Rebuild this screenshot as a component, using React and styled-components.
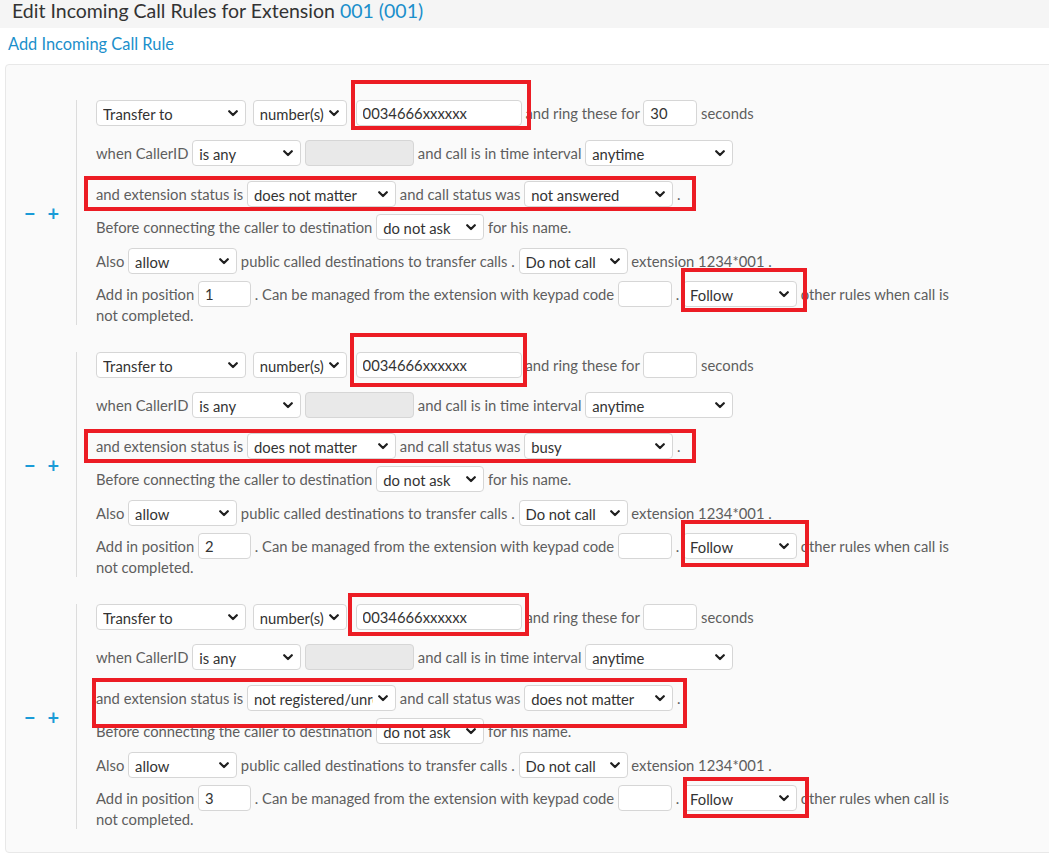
import React from "react";
import styled, { createGlobalStyle } from "styled-components";

const GlobalStyle = createGlobalStyle`
  body {
    margin: 0;
    background: #fff;
    font-family: Lato, "Open Sans", sans-serif;
    color: #5e5e5e;
    overflow-x: hidden;
  }
`;

const Header = styled.div`
  height: 28px;
  padding: 0 12px;
  background: #f5f5f5;
  font-size: 19.5px;
  line-height: 21px;
  color: #333;
`;

const ExtNum = styled.span`
  color: #1b8fcb;
`;

const AddLink = styled.a`
  display: inline-block;
  margin: 7px 0 0 8px;
  font-size: 16.4px;
  line-height: 18px;
  color: #1b8fcb;
  text-decoration: none;
`;

const Panel = styled.div`
  margin: 11px -20px 0 5px;
  padding: 35px 0 23px;
  border: 1px solid #e8e8e8;
  border-radius: 4px;
  background: #fafafa;
`;

const Rule = styled.div`
  display: flex;
  align-items: center;
  margin-top: ${(p) => (p.$first ? 0 : 27)}px;
`;

const Controls = styled.div`
  width: 70px;
  display: flex;
  align-items: center;
  gap: 12px;
  padding-left: 18px;
  box-sizing: border-box;
  font-size: 20px;
  font-weight: 700;
  color: #1a9bd7;
  user-select: none;
`;

const Body = styled.div`
  position: relative;
  flex: 1;
  padding-left: 19px;
  border-left: 1px solid #dcdcdc;
  font-size: 14.8px;
`;

const Row = styled.div`
  margin-top: ${(p) => p.$mt || 0}px;
  height: 26px;
  line-height: 26px;
  white-space: nowrap;
`;

const Tail = styled.div`
  margin-top: -2px;
  line-height: 20px;
`;

const SelectBox = styled.span`
  position: relative;
  display: inline-block;
  vertical-align: top;
  width: ${(p) => p.$w}px;
  height: 26px;
  margin-left: ${(p) => p.$ml || 0}px;
`;

const NativeSelect = styled.select`
  appearance: none;
  display: block;
  width: 100%;
  height: 100%;
  box-sizing: border-box;
  padding: 0 22px 0 6px;
  border: 1px solid #d6d6d6;
  border-radius: 4px;
  background: #fff;
  font: inherit;
  color: #333;
  outline: none;
`;

const Chevron = styled.svg`
  position: absolute;
  right: 8px;
  top: 10px;
  pointer-events: none;
`;

const TextInput = styled.input`
  display: inline-block;
  vertical-align: top;
  width: ${(p) => p.$w}px;
  height: 26px;
  box-sizing: border-box;
  margin: 0 0 0 ${(p) => p.$ml || 0}px;
  padding: 0 6px;
  border: 1px solid #d6d6d6;
  border-radius: 4px;
  background: ${(p) => (p.disabled ? "#e9e9e9" : "#fff")};
  font: inherit;
  color: #333;
  outline: none;
`;

const Mark = styled.div`
  position: absolute;
  box-sizing: border-box;
  border: 4px solid #ec1c24;
  pointer-events: none;
`;

const Select = ({ w, ml, value, options }) => (
  <SelectBox $w={w} $ml={ml}>
    <NativeSelect defaultValue={value}>
      {(options || [value]).map((o) => (
        <option key={o}>{o}</option>
      ))}
    </NativeSelect>
    <Chevron width="10" height="7" viewBox="0 0 10 7">
      <path d="M1.2 1.2 L5 5 L8.8 1.2" fill="none" stroke="#1f1f1f" strokeWidth="2.2" strokeLinecap="round" strokeLinejoin="round" />
    </Chevron>
  </SelectBox>
);

const rules = [
  {
    ring: "30",
    extStatus: "does not matter",
    callStatus: "not answered",
    position: "1",
    marks: [
      [274, -20, 180, 50],
      [7, 76, 612, 35],
      [604, 168, 126, 44],
    ],
  },
  {
    ring: "",
    extStatus: "does not matter",
    callStatus: "busy",
    position: "2",
    marks: [
      [273, -19, 177, 54],
      [7, 77, 612, 34],
      [604, 168, 128, 47],
    ],
  },
  {
    ring: "",
    extStatus: "not registered/unreachable",
    callStatus: "does not matter",
    position: "3",
    marks: [
      [271, -11, 181, 43],
      [15, 74, 595, 50],
      [606, 173, 126, 41],
    ],
  },
];

const RuleBlock = ({ rule, first }) => (
  <Rule $first={first}>
    <Controls>
      <span>−</span>
      <span>+</span>
    </Controls>
    <Body>
      <Row>
        <Select w={150} value="Transfer to" options={["Transfer to", "Voicemail", "Hang up"]} />{" "}
        <Select w={94} ml={3} value="number(s)" options={["number(s)", "extension"]} />{" "}
        <TextInput $w={166} $ml={5} defaultValue="0034666xxxxxx" /> and ring these for{" "}
        <TextInput $w={54} defaultValue={rule.ring} /> seconds
      </Row>
      <Row $mt={14}>
        when CallerID <Select w={109} value="is any" options={["is any", "is", "is not"]} />{" "}
        <TextInput $w={109} disabled /> and call is in time interval{" "}
        <Select w={148} value="anytime" />
      </Row>
      <Row $mt={15}>
        and extension status is{" "}
        <Select w={149} value={rule.extStatus} options={["does not matter", "not registered/unreachable", "busy"]} />{" "}
        and call status was{" "}
        <Select w={149} value={rule.callStatus} options={["does not matter", "not answered", "busy"]} /> .
      </Row>
      <Row $mt={7}>
        Before connecting the caller to destination{" "}
        <Select w={108} value="do not ask" options={["do not ask", "ask"]} /> for his name.
      </Row>
      <Row $mt={8}>
        Also <Select w={109} value="allow" options={["allow", "do not allow"]} /> public called
        destinations to transfer calls .{" "}
        <Select w={109} value="Do not call" options={["Do not call", "Call"]} /> extension 1234*001 .
      </Row>
      <Row $mt={7}>
        Add in position <TextInput $w={53} defaultValue={rule.position} /> . Can be managed from
        the extension with keypad code <TextInput $w={54} /> .{" "}
        <Select w={114} value="Follow" options={["Follow", "Ignore"]} /> other rules when call is
      </Row>
      <Tail>not completed.</Tail>
      {rule.marks.map(([l, t, w, h], i) => (
        <Mark key={i} style={{ left: l, top: t, width: w, height: h }} />
      ))}
    </Body>
  </Rule>
);

export default function App() {
  return (
    <>
      <GlobalStyle />
      <Header>
        Edit Incoming Call Rules for Extension <ExtNum>001 (001)</ExtNum>
      </Header>
      <AddLink href="#">Add Incoming Call Rule</AddLink>
      <Panel>
        {rules.map((r, i) => (
          <RuleBlock key={i} rule={r} first={i === 0} />
        ))}
      </Panel>
    </>
  );
}
